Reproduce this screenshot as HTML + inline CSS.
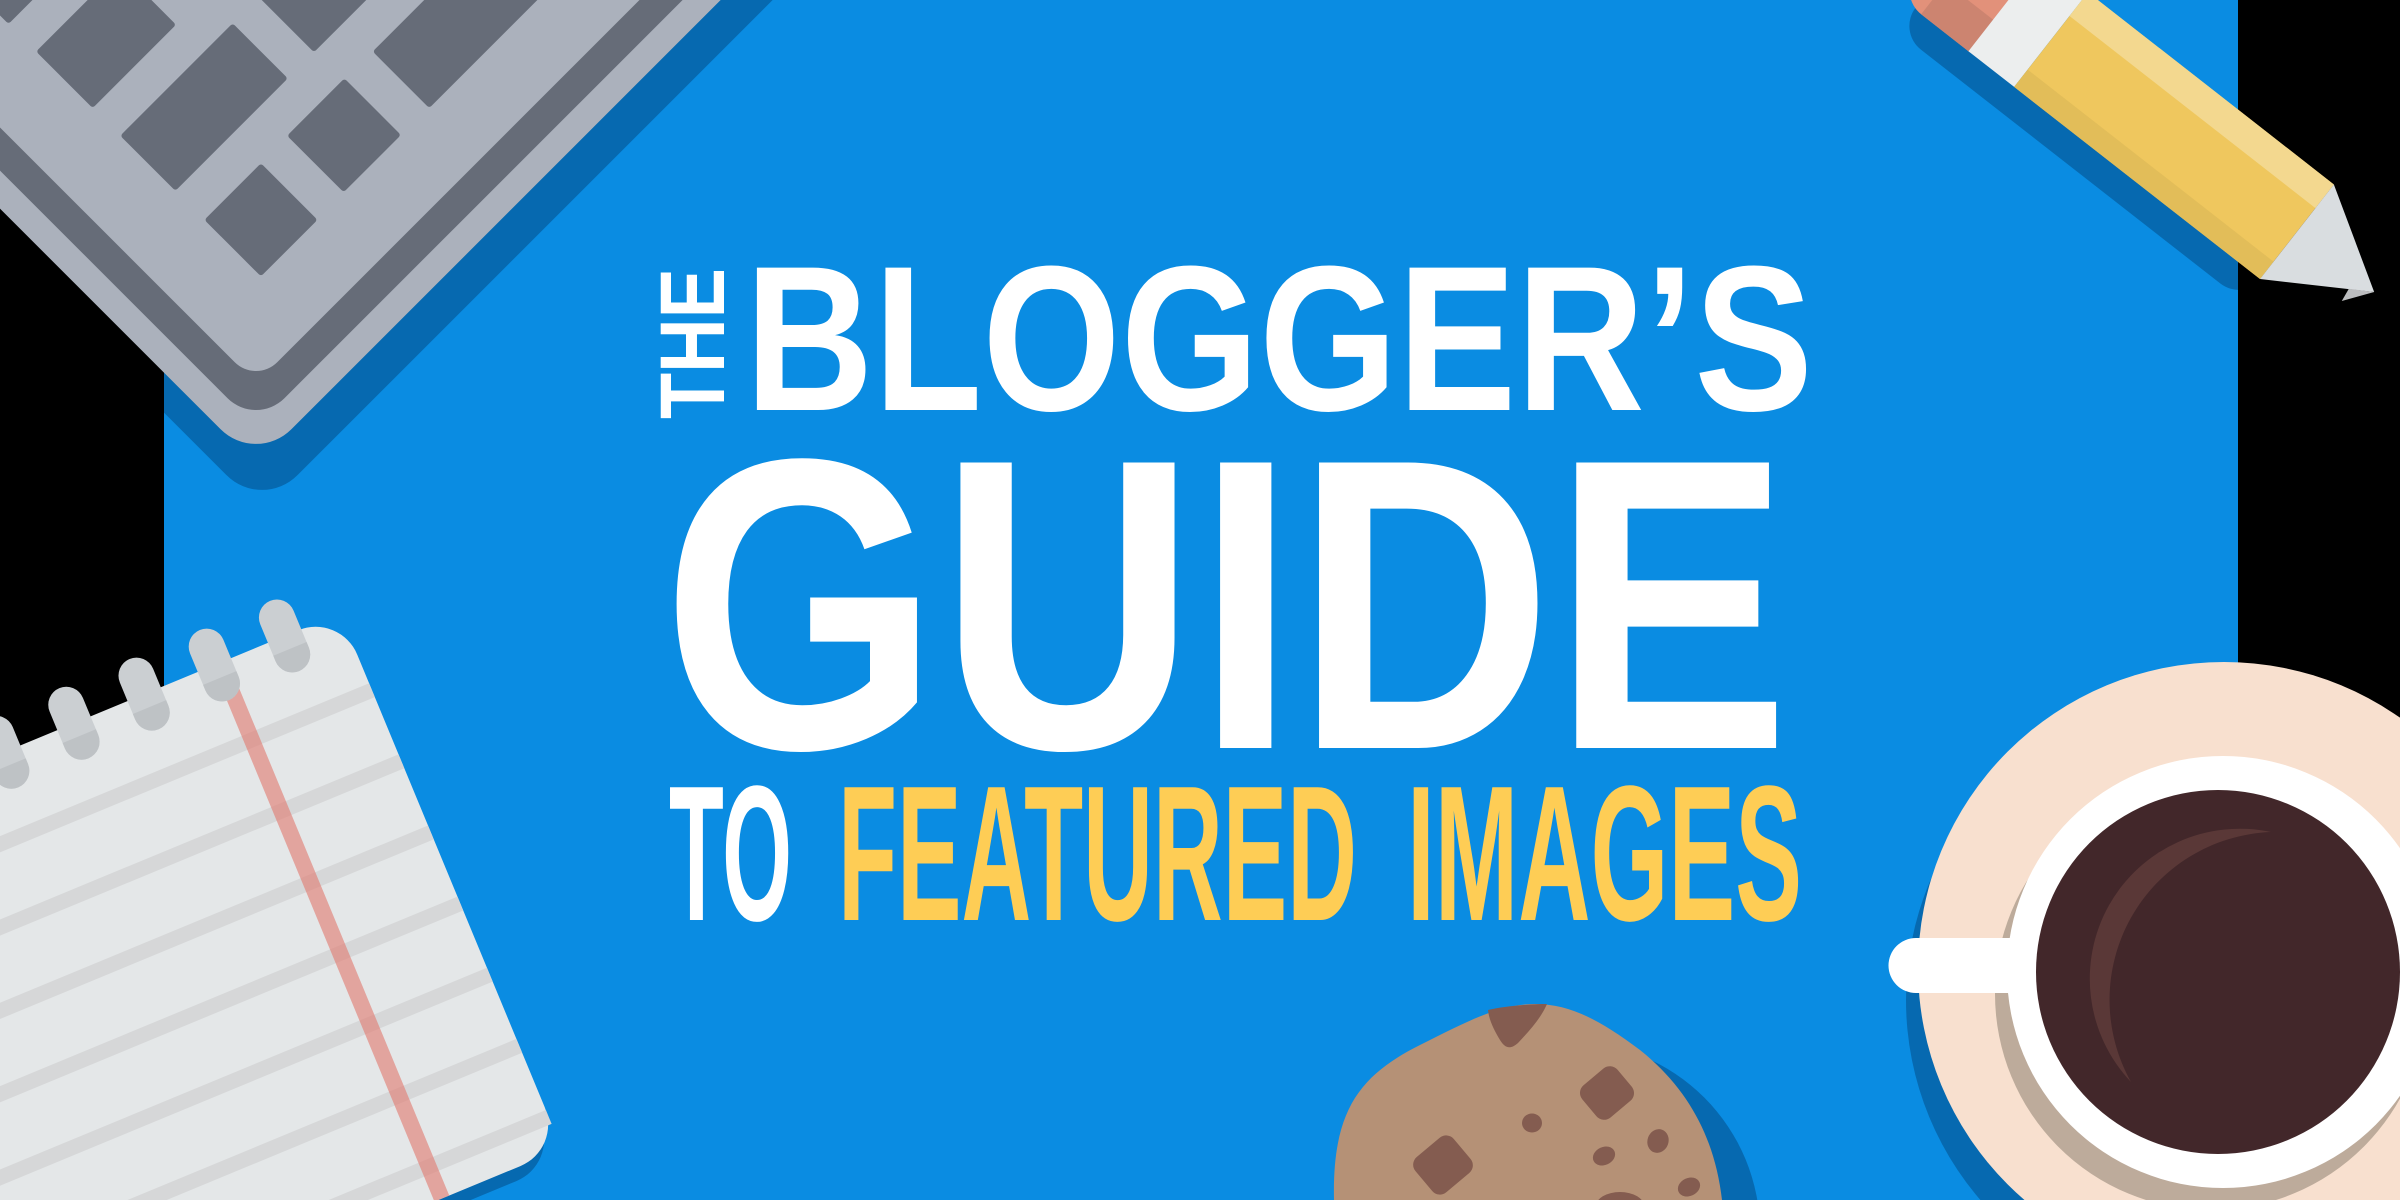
<!DOCTYPE html>
<html><head><meta charset="utf-8"><style>
html,body{margin:0;padding:0;background:#000;width:2400px;height:1200px;overflow:hidden;}
svg{display:block;}
text{font-family:"Liberation Sans",sans-serif;font-weight:bold;}
</style></head><body>
<svg width="2400" height="1200" viewBox="0 0 2400 1200" xmlns="http://www.w3.org/2000/svg">
<defs>
<clipPath id="blue"><rect x="164" y="0" width="2074" height="1200"/></clipPath>
</defs>
<rect x="0" y="0" width="2400" height="1200" fill="#000"/>
<rect x="164" y="0" width="2074" height="1200" fill="#0a8ce2"/>

<!-- shadows clipped to blue -->
<g clip-path="url(#blue)" fill="#0669b0">
  <g transform="translate(262,490) rotate(45)"><rect x="-1000" y="-1000" width="1014.6" height="1014.6" rx="50"/></g>
  <g transform="translate(2244,302) rotate(38)">
    <rect x="-440" y="-120" width="440" height="120" rx="30"/>
    <polygon points="0,0 0,-120 98,-60"/>
  </g>
  <g transform="translate(336,628) rotate(-22.5)"><rect x="-900" y="0" width="900" height="580" rx="45"/></g>
  <circle cx="1570" cy="1232" r="190"/>
  <circle cx="2212" cy="1000" r="306"/>
</g>

<!-- keyboard -->
<g transform="translate(256,444) rotate(45)">
  <rect x="-1000" y="-1000" width="1014.6" height="1014.6" rx="50" fill="#abb1bc"/>
  <rect x="-1000" y="-1000" width="987.7" height="987.7" rx="40" fill="#666c78"/>
  <rect x="-1000" y="-1000" width="957.2" height="957.2" rx="30" fill="#abb1bc"/>
  <g fill="#666c78">
    <rect x="-195" y="-202" width="80" height="80" rx="3"/>
    <rect x="-196" y="-321" width="80" height="81" rx="3"/>
    <rect x="-195" y="-700" width="80" height="340" rx="3"/>
    <rect x="-314" y="-281" width="78" height="159" rx="3"/>
    <rect x="-314" y="-700" width="78" height="382" rx="3"/>
    <rect x="-433" y="-240" width="80" height="118" rx="3"/>
    <rect x="-433" y="-400" width="80" height="122" rx="3"/>
    <rect x="-433" y="-700" width="80" height="262" rx="3"/>
    <rect x="-552" y="-281" width="80" height="159" rx="3"/>
    <rect x="-552" y="-700" width="80" height="382" rx="3"/>
  </g>
</g>

<!-- pencil -->
<g transform="translate(2260,279) rotate(38)">
  <rect x="-460" y="-120" width="120" height="120" rx="30" fill="#e2917a"/>
  <rect x="-430" y="-40" width="61" height="40" fill="#cc8470"/>
  <rect x="-370" y="-120" width="58" height="120" fill="#eceeee"/>
  <rect x="-312" y="-120" width="312" height="120" fill="#efc75e"/>
  <rect x="-312" y="-120" width="312" height="30" fill="#f3d88f"/>
  <rect x="-312" y="-22" width="312" height="22" fill="#e2bd59"/>
  <polygon points="0,0 0,-120 98,-60" fill="#d9dde0"/>
  <polygon points="76,-47 98,-60 78,-33" fill="#bcbdbf"/>
</g>

<!-- notepad -->
<g transform="translate(340,613) rotate(-22.5)">
  <rect x="-900" y="0" width="900" height="580" rx="45" fill="#e4e7e8"/>
  <g fill="#d6d7d8">
    <rect x="-900" y="76" width="900" height="15"/>
    <rect x="-900" y="153" width="900" height="15"/>
    <rect x="-900" y="230" width="900" height="15"/>
    <rect x="-900" y="307" width="900" height="15"/>
    <rect x="-900" y="384" width="900" height="15"/>
    <rect x="-900" y="461" width="900" height="15"/>
    <rect x="-900" y="538" width="900" height="15"/>
  </g>
  <rect x="-138" y="0" width="16" height="580" fill="#e07f77" opacity="0.65"/>
  <g>
    <rect x="-78" y="-38" width="36" height="76" rx="18" fill="#cbcfd2"/>
    <path d="M-78,14 H-42 V20 A18,18 0 0 1 -78,20 Z" fill="#bec2c5"/>
    <rect x="-154" y="-38" width="36" height="76" rx="18" fill="#cbcfd2"/>
    <path d="M-154,14 H-118 V20 A18,18 0 0 1 -154,20 Z" fill="#bec2c5"/>
    <rect x="-230" y="-38" width="36" height="76" rx="18" fill="#cbcfd2"/>
    <path d="M-230,14 H-194 V20 A18,18 0 0 1 -230,20 Z" fill="#bec2c5"/>
    <rect x="-306" y="-38" width="36" height="76" rx="18" fill="#cbcfd2"/>
    <path d="M-306,14 H-270 V20 A18,18 0 0 1 -306,20 Z" fill="#bec2c5"/>
    <rect x="-382" y="-38" width="36" height="76" rx="18" fill="#cbcfd2"/>
    <path d="M-382,14 H-346 V20 A18,18 0 0 1 -382,20 Z" fill="#bec2c5"/>
  </g>
</g>

<!-- cookie -->
<path d="M1334,1200 C1332,1110 1360,1075 1420,1045 C1470,1020 1500,1004 1535,1004 C1570,1004 1600,1020 1640,1050 C1690,1090 1715,1140 1722,1200 Z" fill="#b59176"/>
<g fill="#845c50">
  <path d="M1488,1010 C1505,1006 1530,1004 1547,1004 C1540,1020 1528,1032 1518,1043 C1510,1050 1505,1048 1500,1040 C1494,1030 1489,1020 1488,1010 Z"/>
  <rect x="1584" y="1072" width="46" height="42" rx="10" transform="rotate(-40 1607 1093)"/>
  <ellipse cx="1532" cy="1123" rx="10" ry="9.5"/>
  <rect x="1418" y="1142" width="50" height="46" rx="10" transform="rotate(-40 1443 1165)"/>
  <ellipse cx="1604" cy="1156" rx="11.5" ry="9" transform="rotate(-25 1604 1156)"/>
  <ellipse cx="1658" cy="1141" rx="10.5" ry="12" transform="rotate(20 1658 1141)"/>
  <ellipse cx="1689" cy="1187" rx="11.5" ry="9" transform="rotate(-25 1689 1187)"/>
  <ellipse cx="1620" cy="1206" rx="24" ry="14"/>
</g>

<!-- coffee -->
<circle cx="2224" cy="968" r="306" fill="#f8e0cf"/>
<circle cx="2211" cy="994" r="216" fill="#bdab9b"/>
<path d="M1916,938 H2040 V993 H1916 A27.5,27.5 0 0 1 1916,938 Z" fill="#fff"/>
<circle cx="2223" cy="972" r="216" fill="#fff"/>
<circle cx="2218" cy="972" r="182" fill="#42272a"/>
<path d="M2271,832 A150,150 0 0 0 2131,1082 A168,168 0 0 1 2271,832 Z" fill="#5a3837"/>

<!-- text -->
<text transform="translate(724,419) rotate(-90)" x="0" y="0" font-size="92" fill="#fff" textLength="151" lengthAdjust="spacingAndGlyphs">THE</text>
<text x="745" y="410" font-size="207" fill="#fff" textLength="1068" lengthAdjust="spacingAndGlyphs">BLOGGER’S</text>
<text x="662" y="748" font-size="415" fill="#fff" textLength="1128" lengthAdjust="spacingAndGlyphs">GUIDE</text>
<text x="669" y="920" font-size="193" fill="#fff" textLength="123" lengthAdjust="spacingAndGlyphs">TO</text>
<text x="838" y="920" font-size="193" fill="#fecd55" textLength="519" lengthAdjust="spacingAndGlyphs">FEATURED</text>
<text x="1407" y="920" font-size="193" fill="#fecd55" textLength="395" lengthAdjust="spacingAndGlyphs">IMAGES</text>
</svg>
</body></html>
